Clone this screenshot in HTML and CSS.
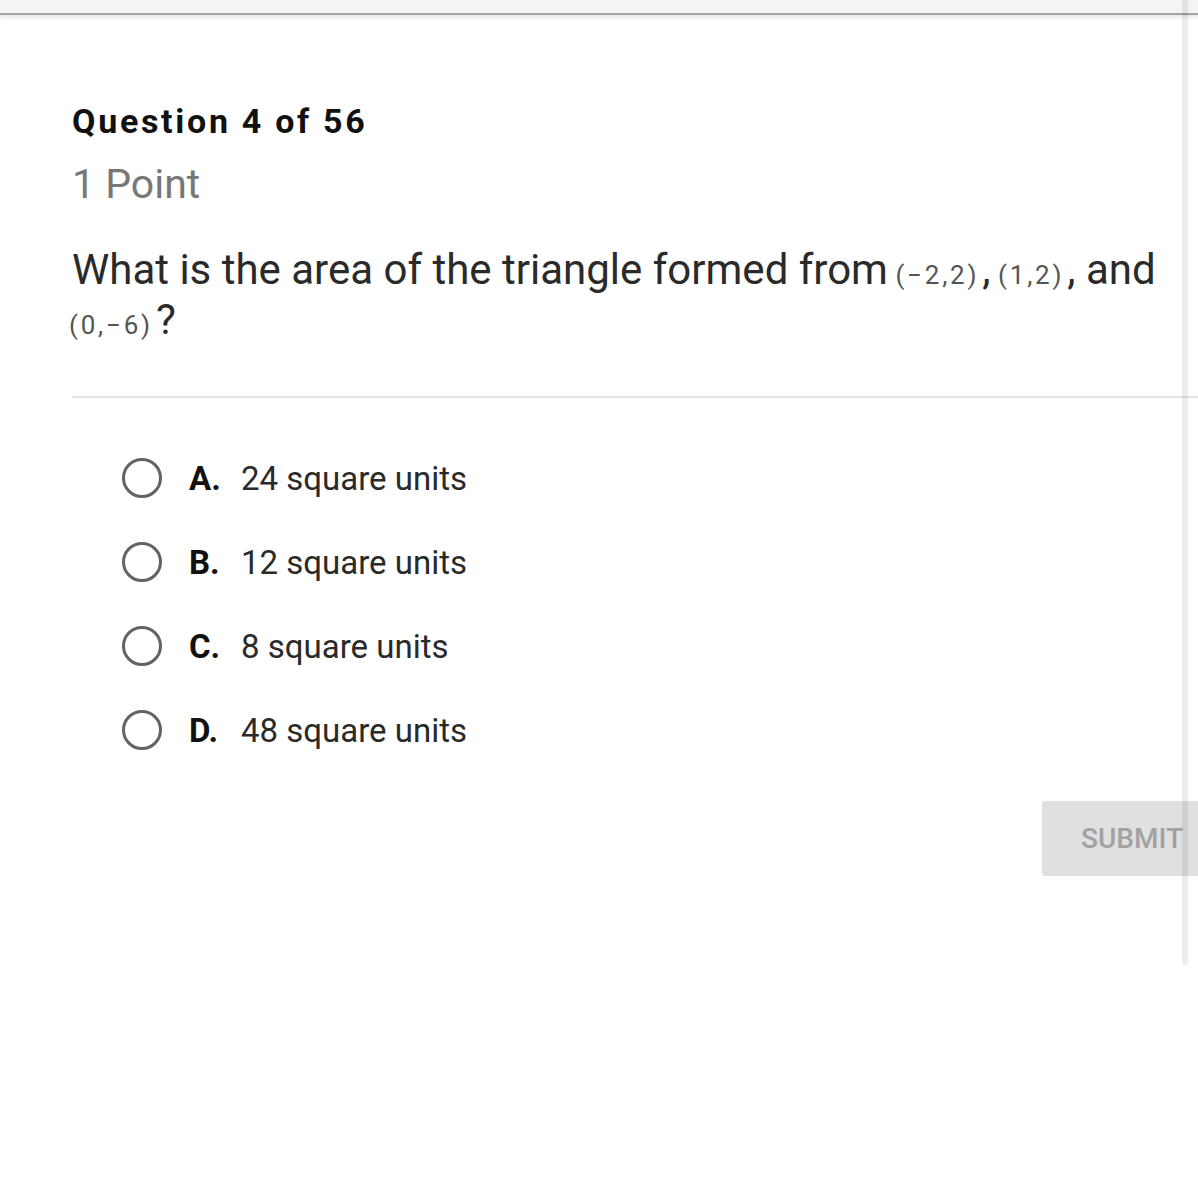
FILE: index.html
```html
<!DOCTYPE html>
<html lang="en">
<head>
<meta charset="utf-8">
<title>Question 4 of 56</title>
<link rel="stylesheet" href="styles.css">
</head>
<body>
<div class="topbar"></div>
<main class="quiz">
  <h1 class="q-title">Question 4 of 56</h1>
  <div class="q-points">1 Point</div>
  <p class="q-text">What is the area of the triangle formed from <span class="math">(−2,2)</span>, <span class="math">(1,2)</span>, and <span class="math">(0,−6)</span>?</p>
  <hr class="divider">
  <ul class="options">
    <li class="option"><span class="radio"></span><span class="opt-letter">A.</span><span class="opt-text">24 square units</span></li>
    <li class="option"><span class="radio"></span><span class="opt-letter">B.</span><span class="opt-text">12 square units</span></li>
    <li class="option"><span class="radio"></span><span class="opt-letter">C.</span><span class="opt-text">8 square units</span></li>
    <li class="option"><span class="radio"></span><span class="opt-letter">D.</span><span class="opt-text">48 square units</span></li>
  </ul>
  <div class="actions"><button class="submit" type="button">SUBMIT</button></div>
</main>
<div class="scrollbar"></div>
</body>
</html>
```
FILE: styles.css
```css
html {
  overflow: hidden;
  background: #fff;
}
body {
  margin: 0;
  font-family: Roboto, "Liberation Sans", sans-serif;
  color: #222;
  background: #fff;
}
.topbar {
  height: 13px;
  background: #f4f4f4;
  border-bottom: 2px solid #a4a4a4;
  box-shadow: 0 2px 4px rgba(0,0,0,0.12);
}
.quiz {
  width: 1150px;
  padding: 86px 0 0 72px;
}
.q-title {
  margin: 0;
  font-size: 34px;
  line-height: 41px;
  font-weight: 700;
  letter-spacing: 2.7px;
  color: #111;
}
.q-points {
  margin-top: 18px;
  font-size: 41px;
  line-height: 48px;
  color: #777;
}
.q-text {
  width: 1100px;
  margin: 37px 0 0;
  font-size: 42px;
  line-height: 50px;
  color: #2a2a2a;
}
.math {
  display: inline-block;
  font-size: 26px;
  line-height: 1;
  letter-spacing: 2.8px;
  color: #555;
  margin: 0 3px 0 -3px;
}
.divider {
  margin: 51px 0 0;
  border: 0;
  border-top: 2px solid #e4e4e4;
  width: 1200px;
}
.options {
  list-style: none;
  margin: 38px 0 0;
  padding: 0;
}
.option {
  display: flex;
  align-items: center;
  height: 84px;
  font-size: 33px;
  color: #2a2a2a;
}
.radio {
  width: 34px;
  height: 34px;
  border: 3px solid #636363;
  border-radius: 50%;
  margin-left: 50px;
  margin-right: 27px;
  flex: none;
}
.opt-letter {
  width: 52px;
  font-weight: 700;
  color: #111;
}
.actions {
  display: flex;
  justify-content: flex-end;
  margin-top: 29px;
}
.submit {
  height: 75px;
  padding: 0 39px;
  border: 0;
  border-radius: 3px;
  background: #e0e0e0;
  color: #a2a2a2;
  font-family: Roboto, "Liberation Sans", sans-serif;
  font-size: 28px;
  font-weight: 500;
}
.scrollbar {
  position: absolute;
  top: 0;
  left: 1182px;
  width: 6px;
  height: 965px;
  border-radius: 0 0 3px 3px;
  background: rgba(0,0,0,0.07);
}
```
